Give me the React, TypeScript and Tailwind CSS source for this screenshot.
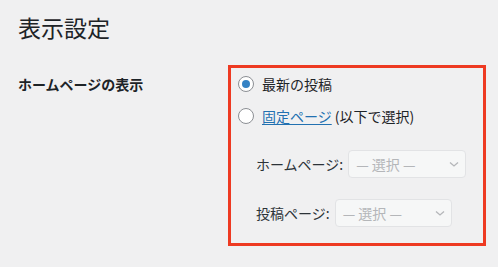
import { useState } from "react";

const FONT = "font-['Noto_Sans_CJK_JP','Noto_Sans',sans-serif]";

function Radio({ checked }: { checked: boolean }) {
  return (
    <span className="w-4 h-4 rounded-full border border-[#8c8f94] bg-white flex items-center justify-center shrink-0">
      {checked && <span className="w-2 h-2 rounded-full bg-[#3582c4]" />}
    </span>
  );
}

function Select({ width }: { width: number }) {
  return (
    <div
      className="h-[28px] rounded-[4px] border border-[#e2e3e5] bg-[#f6f7f7] flex items-center justify-between pl-[7px] pr-[5px] text-[14px] text-[#b4b6b9]"
      style={{ width }}
    >
      <span>— 選択 —</span>
      <svg width="10" height="10" viewBox="0 0 10 10" className="mr-[1px]">
        <path d="M1 3.5 L5 7 L9 3.5" fill="none" stroke="#b4b6b9" strokeWidth="1.3" />
      </svg>
    </div>
  );
}

export default function App() {
  const [choice] = useState<"posts" | "page">("posts");

  return (
    <div className={`w-[498px] h-[267px] bg-[#f0f0f1] text-[#1d2327] pl-[18px] pt-[16px] ${FONT}`}>
      {/* ── Title ─────────────────────────── */}
      <h1 className="text-[23px] leading-[23px] font-normal">表示設定</h1>

      {/* ── Setting row ───────────────────── */}
      <div className="flex mt-[26px]">
        <div className="w-[210px] pt-[11px] text-[14px] leading-[16px] font-semibold">
          ホームページの表示
        </div>

        <div className="w-[258px] border-[3px] border-[#ee3a22] pl-[7px] pt-[8px] pb-[16px] text-[14px]">
          <label className="flex items-center gap-2 h-4 leading-4">
            <Radio checked={choice === "posts"} />
            <span>最新の投稿</span>
          </label>
          <label className="flex items-center gap-2 h-4 leading-4 mt-4">
            <Radio checked={choice === "page"} />
            <span>
              <a className="text-[#2271b1] underline underline-offset-2">固定ページ</a> (以下で選択)
            </span>
          </label>

          <div className="ml-[18px] mt-[26px] flex flex-col gap-[21px] text-[#2c3338]">
            <div className="flex items-center gap-[5px]">
              <span>ホームページ:</span>
              <Select width={118} />
            </div>
            <div className="flex items-center gap-[5px]">
              <span>投稿ページ:</span>
              <Select width={117} />
            </div>
          </div>
        </div>
      </div>
    </div>
  );
}
